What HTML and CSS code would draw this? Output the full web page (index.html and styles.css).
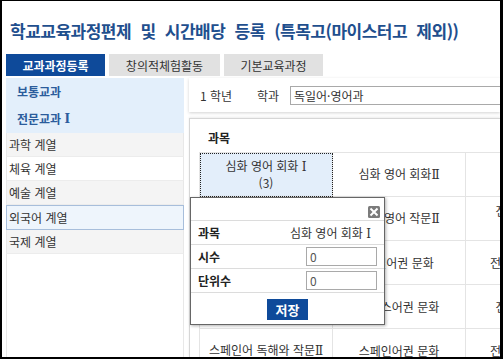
FILE: index.html
```html
<!DOCTYPE html>
<html lang="ko">
<head>
<meta charset="utf-8">
<link rel="stylesheet" href="styles.css">
</head>
<body>
<div class="frame">
  <h1 class="title">학교교육과정편제 및 시간배당 등록 (특목고(마이스터고 제외))</h1>
  <div class="tabs">
    <span class="tab active">교과과정등록</span>
    <span class="tab t2">창의적체험활동</span>
    <span class="tab">기본교육과정</span>
  </div>
  <div class="main">
    <aside class="side">
      <div class="cat">보통교과</div>
      <div class="cat cat2">전문교과 <span class="rn">Ⅰ</span></div>
      <div class="item odd">과학 계열</div>
      <div class="item">체육 계열</div>
      <div class="item odd">예술 계열</div>
      <div class="item sel">외국어 계열</div>
      <div class="item odd">국제 계열</div>
      <div class="fill"></div>
    </aside>
    <section class="panel">
      <div class="filter">
        <span class="grade">1 학년</span>
        <span class="dept">학과</span>
        <div class="select">독일어·영어과</div>
      </div>
      <div class="content">
        <div class="heading">과목</div>
        <table class="grid">
          <tr>
            <td class="cur">심화 영어 회화 <span class="rn">Ⅰ</span><br>(3)</td>
            <td>심화 영어 회화<span class="rn">Ⅱ</span></td>
            <td>&nbsp;</td>
          </tr>
          <tr>
            <td>심화 영어 작문 <span class="rn">Ⅰ</span></td>
            <td>심화 영어 작문<span class="rn">Ⅱ</span></td>
            <td class="top">전공 실무 영어<br>회화</td>
          </tr>
          <tr>
            <td>영미 문화</td>
            <td>독일어권 문화</td>
            <td>전공 기초 독일어</td>
          </tr>
          <tr>
            <td>독일어 독해와 작문</td>
            <td>프랑스어권 문화</td>
            <td>전공 기초 영어</td>
          </tr>
          <tr>
            <td>스페인어 독해와 작문<span class="rn">Ⅱ</span></td>
            <td>스페인어권 문화</td>
            <td>전공 기초 일본어</td>
          </tr>
        </table>
      </div>
    </section>
  </div>
  <div class="popup">
    <div class="pop-head">
      <svg class="close" width="12" height="12" viewBox="0 0 12 12">
        <rect x="0" y="0" width="12" height="12" rx="1.5" fill="#7b7b7b"/>
        <path d="M3.2 3.2 L8.8 8.8 M8.8 3.2 L3.2 8.8" stroke="#fff" stroke-width="2" stroke-linecap="square"/>
      </svg>
    </div>
    <div class="prow"><span class="plabel">과목</span><span class="pval">심화 영어 회화 <span class="rn">Ⅰ</span></span></div>
    <div class="prow"><span class="plabel">시수</span><span class="pinput">0</span></div>
    <div class="prow"><span class="plabel">단위수</span><span class="pinput">0</span></div>
    <div class="pfoot"><span class="btn">저장</span></div>
  </div>
</div>
</body>
</html>
```

FILE: styles.css
```css
* { box-sizing: border-box; }
html, body { margin: 0; padding: 0; background: #fff; }
body {
  font-family: "Noto Sans CJK KR", "Noto Sans", sans-serif;
  font-size: 12px;
  color: #333;
}
.rn {
  font-family: "DejaVu Serif", "Liberation Serif", serif;
  font-weight: normal;
}
.frame {
  position: relative;
  width: 503px;
  height: 359px;
  border-top: 1px solid #000;
  border-left: 2px solid #000;
  border-right: 3px solid #000;
  border-bottom: 2px solid #000;
  overflow: hidden;
  display: flex;
  flex-direction: column;
}
.title {
  margin: 20px 0 0 8px;
  font-size: 17px;
  line-height: 20px;
  font-weight: bold;
  color: #1f4f8e;
  white-space: nowrap;
  letter-spacing: -0.5px;
  word-spacing: 5px;
}
.tabs {
  display: flex;
  gap: 4px;
  margin: 13px 0 0 4px;
  height: 22px;
}
.tab {
  display: flex;
  align-items: center;
  justify-content: center;
  width: 99px;
  height: 22px;
  background: #e1e1e1;
  color: #333;
  font-size: 12px;
}
.tab.t2 { width: 111px; }
.tab.active {
  background: #0e4a9a;
  color: #fff;
  font-weight: bold;
}
.main {
  flex: 1;
  display: flex;
  gap: 5px;
  margin-top: 2px;
  padding-left: 4px;
  min-height: 0;
}
.side {
  width: 178px;
  flex: none;
  display: flex;
  flex-direction: column;
}
.cat {
  height: 26px;
  display: flex;
  align-items: center;
  padding-left: 11px;
  background: #e3effb;
  color: #2b5c9c;
  font-weight: bold;
  font-size: 12px;
  white-space: pre;
}
.cat .rn { font-weight: bold; }
.cat2 { height: 29px; }
.item {
  height: 24px;
  display: flex;
  align-items: center;
  padding-left: 2px;
  font-size: 12px;
  color: #333;
  background: #fff;
  border-left: 1px solid #e8e8e8;
  border-right: 1px solid #e8e8e8;
  border-bottom: 1px solid #ececec;
}
.item.odd { background: #f4f4f4; }
.item.sel {
  height: 25px;
  background: #eef5fc;
  border: 1px solid #a7bedb;
}
.fill {
  flex: 1;
  border-left: 1px solid #e8e8e8;
  border-right: 1px solid #e8e8e8;
}
.panel {
  flex: 1;
  min-width: 0;
  display: flex;
  flex-direction: column;
}
.filter {
  height: 34px;
  flex: none;
  display: flex;
  align-items: center;
  padding-left: 11px;
  background: #fff;
  box-shadow: 0 1px 3px rgba(0,0,0,0.18);
  font-size: 12px;
}
.grade { width: 57px; }
.dept { width: 33px; }
.select {
  flex: 1;
  height: 19px;
  border: 1px solid #a9a9a9;
  border-right: none;
  padding-left: 3px;
  line-height: 17px;
  font-size: 12px;
  color: #333;
}
.content {
  flex: 1;
  margin-top: 6px;
  border: 1px solid #d6d6d6;
  border-right: none;
  border-bottom: none;
  box-shadow: 0 -1px 2px rgba(0,0,0,0.08);
  padding: 10px 0 0 9px;
  overflow: hidden;
}
.heading {
  font-weight: bold;
  font-size: 12px;
  color: #222;
  padding-left: 9px;
  height: 18px;
  line-height: 18px;
  margin-bottom: 5px;
}
.grid {
  border-collapse: collapse;
  table-layout: fixed;
  width: 400px;
}
.grid td {
  width: 133px;
  height: 44px;
  border: 1px solid #e4e4e4;
  text-align: center;
  vertical-align: middle;
  font-size: 12px;
  line-height: 16px;
  color: #333;
  padding: 0;
  white-space: nowrap;
}
.grid td.top { white-space: normal; }
.grid td.cur {
  background: #e3eefa;
  outline: 1px dotted #222;
  outline-offset: -1px;
}
.popup {
  position: absolute;
  left: 188px;
  top: 196px;
  width: 195px;
  height: 128px;
  background: #fff;
  border: 1px solid #666;
  box-shadow: 1px 1px 3px rgba(0,0,0,0.3);
  display: flex;
  flex-direction: column;
}
.pop-head {
  height: 23px;
  border-bottom: 1px solid #dcdcdc;
  display: flex;
  justify-content: flex-end;
  padding: 8px 4px 0 0;
}
.close { display: block; }
.prow {
  height: 24px;
  display: flex;
  align-items: center;
  justify-content: space-between;
  padding: 0 7px 0 7px;
  border-bottom: 1px solid #dcdcdc;
  font-size: 12px;
}
.plabel { font-weight: bold; color: #222; }
.pval { color: #333; padding-right: 6px; }
.pinput {
  width: 71px;
  height: 19px;
  border: 1px solid #a9a9a9;
  padding-left: 3px;
  line-height: 17px;
  color: #555;
}
.pfoot {
  flex: 1;
  display: flex;
  justify-content: center;
  padding-top: 6px;
}
.btn {
  width: 41px;
  height: 21px;
  background: #0e4a9a;
  color: #fff;
  font-weight: bold;
  font-size: 13px;
  display: flex;
  align-items: center;
  justify-content: center;
}
```
